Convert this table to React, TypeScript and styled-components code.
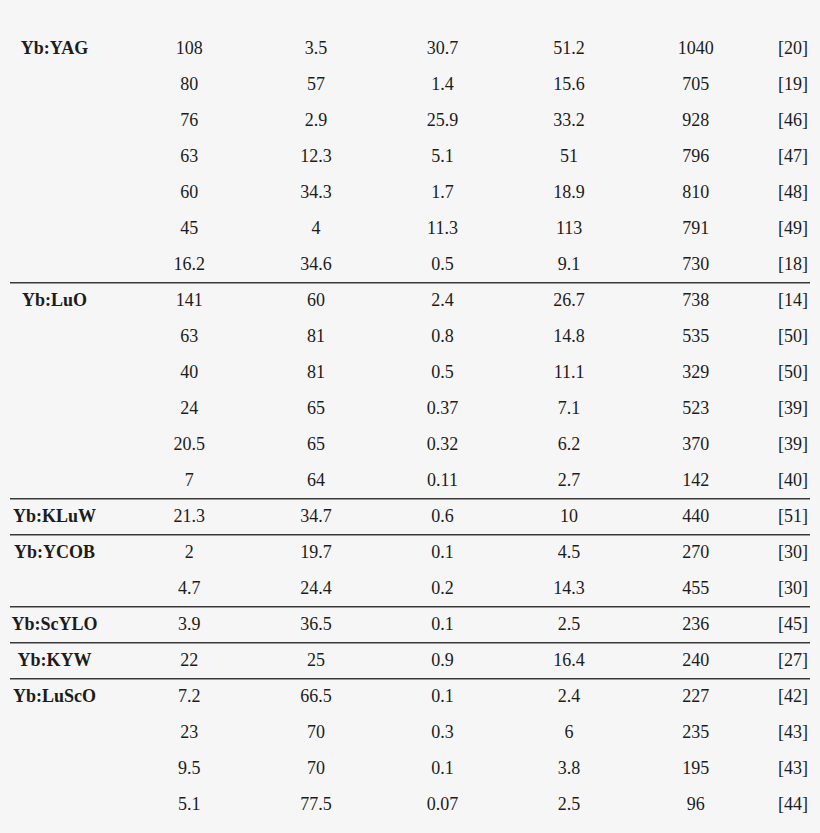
import React from "react";
import styled, { createGlobalStyle } from "styled-components";

const Global = createGlobalStyle`
  html, body { margin: 0; padding: 0; background: #f6f6f6; }
  body { font-family: "Liberation Serif", "Times New Roman", serif; color: #1c1c1c; }
`;

const Page = styled.div`
  width: 820px;
  height: 833px;
  background: #f6f6f6;
  padding: 30px 10px 0 10px;
  box-sizing: border-box;
  overflow: hidden;
`;

const Table = styled.div`
  width: 800px;
  display: flex;
  flex-direction: column;
`;

const Group = styled.div<{ $first?: boolean }>`
  box-shadow: ${(p) => (p.$first ? "none" : "inset 0 1.5px 0 #3a3a3a")};
  display: flex;
  flex-direction: column;
`;

const Row = styled.div`
  display: grid;
  grid-template-columns: 116px repeat(5, 126.6px) 1fr;
  height: 36px;
  align-items: center;
  font-size: 18px;
  line-height: 36px;
`;

const Name = styled.div`
  font-weight: bold;
  text-align: center;
  padding-right: 27px;
  white-space: nowrap;
`;

const Cell = styled.div`
  text-align: center;
  white-space: nowrap;
`;

const Ref = styled.div`
  text-align: right;
  padding-right: 2px;
  white-space: nowrap;
`;

type G = { name: string; rows: string[][] };

const data: G[] = [
  {
    name: "Yb:YAG",
    rows: [
      ["108", "3.5", "30.7", "51.2", "1040", "[20]"],
      ["80", "57", "1.4", "15.6", "705", "[19]"],
      ["76", "2.9", "25.9", "33.2", "928", "[46]"],
      ["63", "12.3", "5.1", "51", "796", "[47]"],
      ["60", "34.3", "1.7", "18.9", "810", "[48]"],
      ["45", "4", "11.3", "113", "791", "[49]"],
      ["16.2", "34.6", "0.5", "9.1", "730", "[18]"],
    ],
  },
  {
    name: "Yb:LuO",
    rows: [
      ["141", "60", "2.4", "26.7", "738", "[14]"],
      ["63", "81", "0.8", "14.8", "535", "[50]"],
      ["40", "81", "0.5", "11.1", "329", "[50]"],
      ["24", "65", "0.37", "7.1", "523", "[39]"],
      ["20.5", "65", "0.32", "6.2", "370", "[39]"],
      ["7", "64", "0.11", "2.7", "142", "[40]"],
    ],
  },
  { name: "Yb:KLuW", rows: [["21.3", "34.7", "0.6", "10", "440", "[51]"]] },
  {
    name: "Yb:YCOB",
    rows: [
      ["2", "19.7", "0.1", "4.5", "270", "[30]"],
      ["4.7", "24.4", "0.2", "14.3", "455", "[30]"],
    ],
  },
  { name: "Yb:ScYLO", rows: [["3.9", "36.5", "0.1", "2.5", "236", "[45]"]] },
  { name: "Yb:KYW", rows: [["22", "25", "0.9", "16.4", "240", "[27]"]] },
  {
    name: "Yb:LuScO",
    rows: [
      ["7.2", "66.5", "0.1", "2.4", "227", "[42]"],
      ["23", "70", "0.3", "6", "235", "[43]"],
      ["9.5", "70", "0.1", "3.8", "195", "[43]"],
      ["5.1", "77.5", "0.07", "2.5", "96", "[44]"],
    ],
  },
];

export default function App() {
  return (
    <>
      <Global />
      <Page>
        <Table>
          {data.map((g, gi) => (
            <Group key={g.name} $first={gi === 0}>
              {g.rows.map((r, ri) => (
                <Row key={ri}>
                  <Name>{ri === 0 ? g.name : ""}</Name>
                  {r.slice(0, 5).map((v, ci) => (
                    <Cell key={ci}>{v}</Cell>
                  ))}
                  <Ref>{r[5]}</Ref>
                </Row>
              ))}
            </Group>
          ))}
        </Table>
      </Page>
    </>
  );
}
